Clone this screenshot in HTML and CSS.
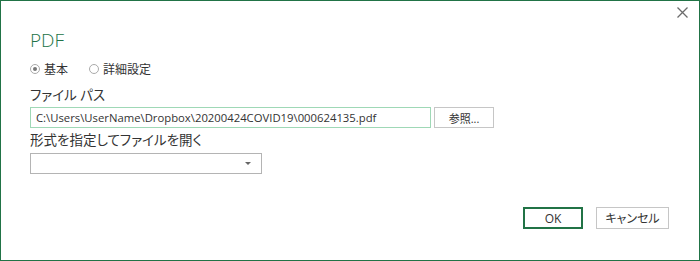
FILE: index.html
```html
<!DOCTYPE html>
<html lang="ja">
<head>
  <meta charset="UTF-8" />
  <title>PDF</title>
  <link rel="stylesheet" href="styles.css">
</head>
<body>

  <div class="dialog">
    <button class="close-btn" title="閉じる">
      <svg width="11" height="11" viewBox="0 0 11 11">
        <path d="M0.5 0.5 L10.5 10.5 M10.5 0.5 L0.5 10.5" stroke="#6b6b6b" stroke-width="1.3" fill="none"/>
      </svg>
    </button>

    <h1 class="title">PDF</h1>

    <div class="mode-row">
      <label class="radio"><span class="radio-dot checked"></span>基本</label>
      <label class="radio"><span class="radio-dot"></span>詳細設定</label>
    </div>

    <div class="field-label">ファイル パス</div>
    <div class="path-row">
      <div class="path-input">C:\Users\UserName\Dropbox\20200424COVID19\000624135.pdf</div>
      <button class="browse-btn">参照...</button>
    </div>

    <div class="field-label second">形式を指定してファイルを開く</div>
    <div class="select-box">
      <span class="select-arrow"></span>
    </div>

    <div class="footer">
      <button class="ok-btn">OK</button>
      <button class="cancel-btn">キャンセル</button>
    </div>
  </div>

</body>
</html>
```

FILE: styles.css
```css
body {
  margin: 0;
  font-family: 'Open Sans', 'Noto Sans CJK JP', sans-serif;
  font-feature-settings: "palt";
  background: white;
  color: #333;
}

.dialog {
  position: relative;
  box-sizing: border-box;
  width: 700px;
  height: 261px;
  border: 1px solid #217346;
  padding: 0 0 0 29px;
  font-size: 12px;
}

.close-btn {
  position: absolute;
  top: 6px;
  right: 11px;
  border: none;
  background: none;
  padding: 0;
  width: 11px;
  height: 11px;
  cursor: pointer;
}

.close-btn svg {
  display: block;
}

.title {
  margin: 27px 0 0;
  font-size: 19px;
  font-weight: 300;
  line-height: 24px;
  color: #217346;
}

.mode-row {
  display: flex;
  gap: 21px;
  margin-top: 9px;
  height: 16px;
  align-items: center;
}

.radio {
  display: flex;
  align-items: center;
  gap: 4px;
  font-size: 12px;
  color: #333;
}

.radio-dot {
  box-sizing: border-box;
  width: 10px;
  height: 10px;
  border: 1px solid #aaa;
  border-radius: 50%;
  position: relative;
}

.radio-dot.checked::after {
  content: "";
  position: absolute;
  left: 2px;
  top: 2px;
  width: 4px;
  height: 4px;
  border-radius: 50%;
  background: #777;
}

.field-label {
  margin-top: 9px;
  font-size: 13.5px;
  line-height: 19px;
  color: #333;
}

.field-label.second {
  margin-top: 3px;
}

.path-row {
  display: flex;
  gap: 3px;
  margin-top: 2px;
}

.path-input {
  box-sizing: border-box;
  width: 401px;
  height: 21px;
  border: 1px solid #9fd8b6;
  padding: 0 5px;
  font-size: 11.3px;
  line-height: 19px;
  color: #333;
  white-space: nowrap;
}

.browse-btn,
.cancel-btn {
  box-sizing: border-box;
  height: 21px;
  border: 1px solid #c6c6c6;
  background: white;
  font-family: inherit;
  font-feature-settings: "palt";
  font-size: 11px;
  color: #333;
  padding: 0;
}

.browse-btn {
  width: 60px;
}

.select-box {
  position: relative;
  box-sizing: border-box;
  width: 232px;
  height: 21px;
  margin-top: 3px;
  border: 1px solid #b4b4b4;
}

.select-arrow {
  position: absolute;
  right: 10px;
  top: 8px;
  width: 0;
  height: 0;
  border-left: 3px solid transparent;
  border-right: 3px solid transparent;
  border-top: 3px solid #666;
}

.footer {
  display: flex;
  justify-content: flex-end;
  gap: 13px;
  margin-top: 33px;
  padding-right: 30px;
}

.ok-btn {
  box-sizing: border-box;
  width: 60px;
  height: 22px;
  border: 2px solid #217346;
  background: white;
  font-family: inherit;
  font-size: 12px;
  color: #333;
  padding: 0;
}

.cancel-btn {
  width: 73px;
  height: 22px;
  font-size: 12px;
}
```
